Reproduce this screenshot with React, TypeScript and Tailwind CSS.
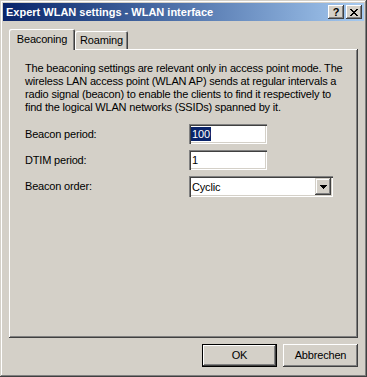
import React from 'react';

const raised = 'shadow-[inset_-1px_-1px_0_#404040,inset_1px_1px_0_#fff,inset_-2px_-2px_0_#808080]';
const sunken = 'shadow-[inset_1px_1px_0_#808080,inset_2px_2px_0_#404040,inset_-1px_-1px_0_#fff,inset_-2px_-2px_0_#d4d0c8]';

const TitleButton: React.FC<{ children: React.ReactNode }> = ({ children }) => (
  <div className={`w-[16px] h-[14px] bg-[#d4d0c8] flex items-center justify-center ${raised}`}>{children}</div>
);

const FieldRow: React.FC<{ label: string; children: React.ReactNode }> = ({ label, children }) => (
  <div className="flex items-center">
    <span className="w-[164px] leading-[13px]">{label}</span>
    {children}
  </div>
);

export default function App() {
  const lines = [
    'The beaconing settings are relevant only in access point mode. The',
    'wireless LAN access point (WLAN AP) sends at regular intervals a',
    'radio signal (beacon) to enable the clients to find it respectively to',
    'find the logical WLAN networks (SSIDs) spanned by it.',
  ];

  return (
    <div
      className="w-[367px] h-[377px] bg-[#d4d0c8] p-[3px] flex flex-col text-[11px] text-black shadow-[inset_-1px_-1px_0_#404040,inset_1px_1px_0_#d4d0c8,inset_-2px_-2px_0_#808080,inset_2px_2px_0_#fff]"
      style={{ fontFamily: '"Liberation Sans", Arial, sans-serif' }}
    >
      {/* title bar */}
      <div className="h-[18px] shrink-0 flex items-center pl-[3px] pr-[2px] bg-linear-to-r from-[#0a246a] to-[#a6caf0]">
        <span className="text-white font-bold text-[11px] leading-[13px] whitespace-nowrap">
          Expert WLAN settings - WLAN interface
        </span>
        <div className="ml-auto flex gap-[2px]">
          <TitleButton>
            <span className="font-bold text-[11px] leading-none mt-px">?</span>
          </TitleButton>
          <TitleButton>
            <svg width="8" height="7" viewBox="0 0 8 7" shapeRendering="crispEdges">
              <path d="M0 0h2v1H0zM6 0h2v1H6zM1 1h2v1H1zM5 1h2v1H5zM2 2h4v1H2zM3 3h2v1H3zM2 4h4v1H2zM1 5h2v1H1zM5 5h2v1H5zM0 6h2v1H0zM6 6h2v1H6z" fill="#000" />
            </svg>
          </TitleButton>
        </div>
      </div>

      {/* body */}
      <div className="flex-1 flex flex-col px-[6px] pt-[8px] pb-[8px] tracking-[-0.18px]">
        <div className="h-[20px] flex items-end relative z-10">
          <div className="w-[66px] h-[21px] -mb-px bg-[#d4d0c8] rounded-t-[2px] flex items-center justify-center shadow-[inset_1px_1px_0_#fff,inset_-1px_0_0_#404040,inset_-2px_0_0_#808080]">
            <span className="leading-[13px]">Beaconing</span>
          </div>
          <div className="w-[53px] h-[18px] bg-[#d4d0c8] rounded-t-[2px] flex items-center justify-center shadow-[inset_1px_1px_0_#fff,inset_-1px_0_0_#404040,inset_-2px_0_0_#808080]">
            <span className="leading-[13px]">Roaming</span>
          </div>
        </div>

        <div className={`h-[289px] shrink-0 bg-[#d4d0c8] pl-[16px] pt-[13px] ${raised}`}>
          <div className="leading-[13px]">
            {lines.map((l) => (
              <div key={l} className="whitespace-nowrap">{l}</div>
            ))}
          </div>

          <div className="mt-[10px] flex flex-col gap-[6px]">
            <FieldRow label="Beacon period:">
              <div className={`w-[78px] h-[20px] bg-white flex items-center pl-[2px] ${sunken}`}>
                <span className="bg-[#0a246a] text-white leading-[14px] px-px">100</span>
              </div>
            </FieldRow>
            <FieldRow label="DTIM period:">
              <div className={`w-[78px] h-[20px] bg-white flex items-center pl-[3px] ${sunken}`}>
                <span className="leading-[14px]">1</span>
              </div>
            </FieldRow>
            <FieldRow label="Beacon order:">
              <div className={`w-[144px] h-[21px] bg-white flex items-center pl-[3px] pr-[2px] ${sunken}`}>
                <span className="leading-[14px]">Cyclic</span>
                <div className="ml-auto w-[16px] h-[17px] bg-[#d4d0c8] flex items-center justify-center shadow-[inset_-1px_-1px_0_#404040,inset_1px_1px_0_#d4d0c8,inset_-2px_-2px_0_#808080,inset_2px_2px_0_#fff]">
                  <svg width="7" height="4" viewBox="0 0 7 4" shapeRendering="crispEdges">
                    <path d="M0 0h7v1H0zM1 1h5v1H1zM2 2h3v1H2zM3 3h1v1H3z" fill="#000" />
                  </svg>
                </div>
              </div>
            </FieldRow>
          </div>
        </div>

        <div className="mt-[6px] flex justify-end gap-[6px]">
          <div className="w-[75px] h-[23px] border border-black bg-[#d4d0c8] flex items-center justify-center shadow-[inset_-1px_-1px_0_#404040,inset_1px_1px_0_#fff,inset_-2px_-2px_0_#808080]">
            OK
          </div>
          <div className={`w-[75px] h-[23px] bg-[#d4d0c8] flex items-center justify-center ${raised}`}>
            Abbrechen
          </div>
        </div>
      </div>
    </div>
  );
}
